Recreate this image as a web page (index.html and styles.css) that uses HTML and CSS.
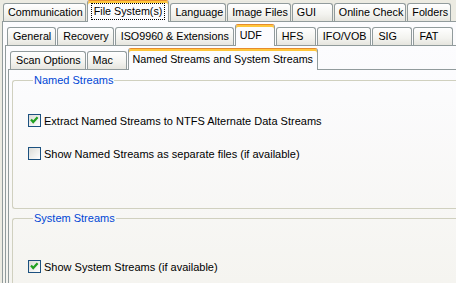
FILE: index.html
```html
<!DOCTYPE html>
<html lang="en">
<head>
    <meta charset="UTF-8">
    <title>File System Settings</title>
    <link rel="stylesheet" href="styles.css">
</head>
<body>
    <div class="window">
        <div class="tab-control">
            <div class="tab-row top-row">
                <div class="tab">Communication</div>
                <div class="tab active"><span class="focus">File System(s)</span></div>
                <div class="tab">Language</div>
                <div class="tab">Image Files</div>
                <div class="tab">GUI</div>
                <div class="tab">Online Check</div>
                <div class="tab">Folders</div>
            </div>
            <div class="panel panel-outer">
                <div class="tab-control">
                    <div class="tab-row">
                        <div class="tab">General</div>
                        <div class="tab">Recovery</div>
                        <div class="tab">ISO9960 &amp; Extensions</div>
                        <div class="tab active">UDF</div>
                        <div class="tab">HFS</div>
                        <div class="tab">IFO/VOB</div>
                        <div class="tab">SIG</div>
                        <div class="tab">FAT</div>
                    </div>
                    <div class="panel panel-middle">
                        <div class="tab-control">
                            <div class="tab-row">
                                <div class="tab">Scan Options</div>
                                <div class="tab">Mac</div>
                                <div class="tab active">Named Streams and System Streams</div>
                            </div>
                            <div class="panel panel-inner">
                                <fieldset class="group group-named">
                                    <legend>Named Streams</legend>
                                    <label class="check first">
                                        <span class="box">
                                            <svg width="11" height="11" viewBox="0 0 11 11"><path d="M2 4.5 L4.2 7 L8.6 2.3" fill="none" stroke="#21a121" stroke-width="2.2"/></svg>
                                        </span>
                                        Extract Named Streams to NTFS Alternate Data Streams
                                    </label>
                                    <label class="check">
                                        <span class="box"></span>
                                        Show Named Streams as separate files (if available)
                                    </label>
                                </fieldset>
                                <fieldset class="group group-system">
                                    <legend>System Streams</legend>
                                    <label class="check first">
                                        <span class="box">
                                            <svg width="11" height="11" viewBox="0 0 11 11"><path d="M2 4.5 L4.2 7 L8.6 2.3" fill="none" stroke="#21a121" stroke-width="2.2"/></svg>
                                        </span>
                                        Show System Streams (if available)
                                    </label>
                                </fieldset>
                            </div>
                        </div>
                    </div>
                </div>
            </div>
        </div>
    </div>
</body>
</html>
```

FILE: styles.css
```css
* {
    margin: 0;
    padding: 0;
    box-sizing: border-box;
}

body {
    background-color: #ecebe2;
    font-family: 'Liberation Sans', Arial, sans-serif;
    font-size: 10.75px;
    color: #000;
    overflow: hidden;
}

.window {
    width: 480px;
    height: 283px;
    padding-left: 2px;
    overflow: hidden;
}

.tab-control {
    display: flex;
    flex-direction: column;
}

.tab-row {
    display: flex;
    align-items: flex-end;
    gap: 1px;
    height: 21px;
    padding-left: 2px;
}

.tab {
    min-width: 40px;
    height: 18px;
    padding: 0 4px 0 5px;
    line-height: 16px;
    white-space: nowrap;
    border: 1px solid #919b9c;
    border-bottom: none;
    border-radius: 3px 3px 0 0;
    background: linear-gradient(#ffffff, #f3f3ef 60%, #e6e5de);
}

.top-row {
    padding-left: 1px;
}

.top-row .tab {
    min-width: 41px;
    padding: 0 2px 0 4px;
}

.tab.active,
.top-row .tab.active {
    position: relative;
    z-index: 1;
    height: 22px;
    margin-bottom: -1px;
    padding: 2px 4px 0;
    border-top: 1px solid #e68b2c;
    box-shadow: inset 0 2px 0 #ffc73c;
    background: #fcfcfe;
}

.focus {
    display: inline-block;
    padding: 0 2px;
    outline: 1px dotted #000;
    outline-offset: 0;
    line-height: 15px;
}

.panel {
    border: 1px solid #919b9c;
    border-right: none;
    background: linear-gradient(#fcfcfe, #f4f3ee 240px);
}

.panel-outer {
    height: 300px;
    padding: 2px 0 0 2px;
}

.panel-middle {
    height: 280px;
    padding: 2px 0 0 2px;
}

.panel-inner {
    height: 260px;
    padding: 4px 0 0 3px;
}

.group {
    border: 1px solid #d0d0bf;
    border-right: none;
    border-radius: 3px 0 0 3px;
    padding: 0 0 0 15px;
}

.group legend {
    margin-left: 5px;
    padding: 0 1px;
    line-height: 13px;
    font-size: 11px;
    color: #0046d5;
}

.group-named {
    height: 135px;
    margin-bottom: 3px;
}

.group-system {
    height: 80px;
}

.check {
    display: flex;
    align-items: center;
    gap: 3px;
    height: 13px;
    margin-top: 20px;
    font-size: 11px;
}

.group-named .check.first {
    margin-top: 27px;
}

.group-system .check.first {
    margin-top: 35px;
}

.box {
    display: flex;
    align-items: center;
    justify-content: center;
    width: 13px;
    height: 13px;
    border: 1px solid #1c5180;
    background: linear-gradient(135deg, #dcdcd7, #ffffff);
}
```
